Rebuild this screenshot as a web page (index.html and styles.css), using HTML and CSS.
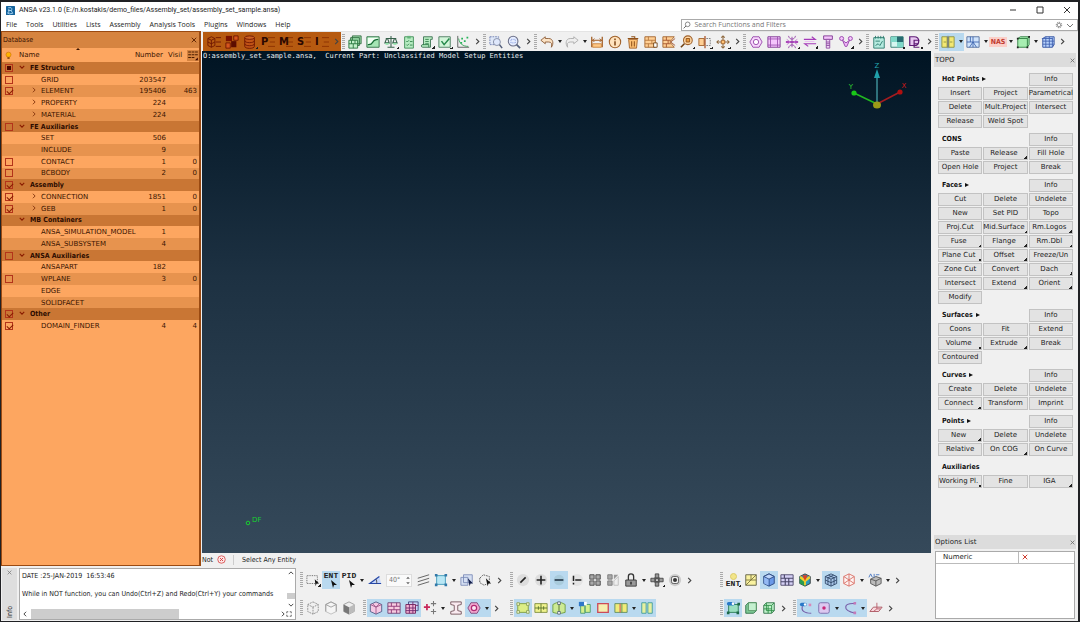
FILE: index.html
```html
<!DOCTYPE html>
<html lang="en">
<head>
<meta charset="utf-8">
<title>ANSA v23.1.0</title>
<link rel="stylesheet" href="styles.css">
</head>
<body>
<svg class="sprite" aria-hidden="true">
  <symbol id="i-app" viewBox="0 0 16 16"><rect width="16" height="16" rx="1" fill="#14639c"/><path d="M4 3h5a3 3 0 0 1 0 5l3 5M5 5v8M4 8h6M2 12l4 2 6-1" fill="none" stroke="#bfe6ff" stroke-width="1.4"/></symbol>
  <symbol id="i-bulb" viewBox="0 0 16 16"><circle cx="8" cy="6.500" r="4.500" fill="#ffb300" stroke="#c86a00"/><path d="M6 11h4v3H6z" fill="#8a4a10"/></symbol>
  <symbol id="i-cols" viewBox="0 0 16 16"><path d="M1 3h4M6 3h4M11 3h4M1 7h4M6 7h4M11 7h4M1 11h4M6 11h4" stroke="#4a1c00" stroke-width="1.500"/><path d="M15 11v4h-4z" fill="#300"/></symbol>
  <symbol id="i-down" viewBox="0 0 8 8"><path d="M1 2.500l3 3 3-3" fill="none" stroke="#8a1c00" stroke-width="1.500"/></symbol>
  <symbol id="i-right" viewBox="0 0 8 8"><path d="M2.500 1l3 3-3 3" fill="none" stroke="#8a3a10" stroke-width="1.300"/></symbol>
  <symbol id="i-chev" viewBox="0 0 8 8"><path d="M2.500 1l3 3-3 3" fill="none" stroke="#444" stroke-width="1.300"/></symbol>
  <symbol id="i-x" viewBox="0 0 8 8"><path d="M1 1l6 6M7 1L1 7" fill="none" stroke="currentColor" stroke-width="1.200"/></symbol>
  <symbol id="i-gear" viewBox="0 0 12 12"><circle cx="6" cy="6" r="4" fill="none" stroke="#777" stroke-width="1.500" stroke-dasharray="2 1"/><circle cx="6" cy="6" r="2.500" fill="none" stroke="#777"/></symbol>
  <symbol id="i-find" viewBox="0 0 12 12"><circle cx="7" cy="5" r="3.500" fill="none" stroke="#555"/><path d="M4.500 7.500L1 11" stroke="#555" stroke-width="1.300"/></symbol>

  <symbol id="i-tree" viewBox="0 0 16 16"><path d="M1 4l4-2 4 2v8l-4 2-4-2zM1 4l4 2 4-2M5 6v8M1 8l4 2 4-2" fill="none" stroke="#6b1500"/><path d="M10 3h6M10 8h6M10 13h6" stroke="#6b1500"/></symbol>
  <symbol id="i-parts" viewBox="0 0 16 16"><path d="M1 1h7v6H1z" fill="#7a1200"/><path d="M7 7h6v7H7z" fill="#5b0d00"/><path d="M10 1h5v5h-5zM1 9h5v6H1z" fill="#d4551d" stroke="#6b1500"/></symbol>
  <symbol id="i-db" viewBox="0 0 16 16"><path d="M2 3v10c0 3 11 3 11 0V3M2 6.500c0 3 11 3 11 0M2 10c0 3 11 3 11 0" fill="#c15316" stroke="#6b1500"/><ellipse cx="7.500" cy="3" rx="5.500" ry="2" fill="#cc6124" stroke="#6b1500"/></symbol>
  <symbol id="i-lines" viewBox="0 0 16 16"><path d="M8 3h8M10 8h6M8 13h8" stroke="#8a3000"/></symbol>

  <symbol id="i-stack" viewBox="0 0 16 16"><path d="M5 1h10v9H5zM3 3h10v9H3z" fill="#9ad8a8" stroke="#2f6b3e"/><path d="M1 6h10v9H1z" fill="#c3efca" stroke="#23733a"/><path d="M1 10h10M4 6v4M8 6v4M6 10v5" stroke="#23733a"/></symbol>
  <symbol id="i-curvebox" viewBox="0 0 16 16"><path d="M1 2h14v12H1z" fill="#a5e5b4" stroke="#2b6d40"/><path d="M2 11c8 1 3-6 12-6v-2H2z" fill="#f0fff2"/><path d="M2 11c8 1 3-6 12-6" fill="none" stroke="#176c35" stroke-width="1.400"/></symbol>
  <symbol id="i-scale" viewBox="0 0 16 16"><path d="M8 1v13M4 14h8M2 4h12M3 4L1 9h5L4 4M12 4l-2 5h5l-2-5" fill="none" stroke="#35604a" stroke-width="1.200"/><path d="M1 9h5l-1 2H2zM10 9h5l-1 2h-3z" fill="#8fdda5"/></symbol>
  <symbol id="i-clip" viewBox="0 0 16 16"><path d="M3 2h10v13H3z" fill="#b7ecc2" stroke="#3b8a52"/><path d="M6 1h4v3H6z" fill="#65b47b"/><path d="M5 7l1 1 2-2M5 11l1 1 2-2M9 7.500h3M9 11.500h3" fill="none" stroke="#2f7d47"/></symbol>
  <symbol id="i-scroll" viewBox="0 0 16 16"><path d="M4 2h10v3h-2v9H3c-2 0-2-3 0-3h1z" fill="#b7ecc2" stroke="#3b7050"/><path d="M6 5h4M6 7.500h4M6 10h4M3 11h7v3" fill="none" stroke="#2f7d47"/></symbol>
  <symbol id="i-check" viewBox="0 0 16 16"><path d="M1 2h13v12H1z" fill="#d2f5d9" stroke="#47785a"/><path d="M4 7l3 4 6-7" fill="none" stroke="#24884a" stroke-width="1.700"/></symbol>
  <symbol id="i-plot" viewBox="0 0 16 16"><path d="M2 1v13h13" fill="none" stroke="#555"/><path d="M3 4c1 6 5 9 11 9" fill="none" stroke="#2f9f52"/><path d="M6 3h2v2H6zM9 6h2v2H9zM12 2h2v2h-2zM5 8h2v2H5z" fill="#28b35a"/></symbol>
  <symbol id="i-zoombox" viewBox="0 0 16 16"><path d="M1 2h10v9H1z" fill="#dfe8f8" stroke="#6b7bb0" stroke-dasharray="2 1"/><circle cx="9" cy="8" r="4" fill="#dfe8fc" stroke="#8088a0"/><path d="M12 11l3 4" stroke="#55607c" stroke-width="1.800"/></symbol>
  <symbol id="i-zoom" viewBox="0 0 16 16"><circle cx="7" cy="7" r="5.500" fill="#e5ecff" stroke="#6b6f88" stroke-width="1.200"/><path d="M4.500 5h5v4h-5z" fill="none" stroke="#7d96d8" stroke-dasharray="1 1"/><path d="M11 11l4 4" stroke="#55607c" stroke-width="2"/></symbol>
  <symbol id="i-undo" viewBox="0 0 16 16"><path d="M6 2L1 6l5 4V8h4c3 0 4 2 3 6 3-4 2-10-3-10H6z" fill="#fbe2c4" stroke="#8b5a35"/></symbol>
  <symbol id="i-redo" viewBox="0 0 16 16"><path d="M10 2l5 4-5 4V8H6c-3 0-4 2-3 6C0 10 1 4 6 4h4z" fill="#eee" stroke="#aaa"/></symbol>
  <symbol id="i-measure" viewBox="0 0 16 16"><path d="M2 2v12M14 2v12M2 6h12" stroke="#a05a20" stroke-width="1.400"/><path d="M3 10h10v4H3z" fill="#ffc987" stroke="#c8813c"/><path d="M5 4L3 6l2 2M11 4l2 2-2 2" fill="none" stroke="#a05a20"/></symbol>
  <symbol id="i-info" viewBox="0 0 16 16"><circle cx="8" cy="8" r="6.500" fill="#ffe3be" stroke="#a0612a" stroke-width="1.200"/><path d="M8 7v5M8 4v2" stroke="#7d4415" stroke-width="1.700"/></symbol>
  <symbol id="i-trash" viewBox="0 0 16 16"><path d="M3 5h10l-1 10H4z" fill="#ffc274" stroke="#a0612a"/><path d="M2 4h12M6 2h4v2M6.500 7v6M9.500 7v6" fill="none" stroke="#8f5018" stroke-width="1.200"/></symbol>
  <symbol id="i-mesh" viewBox="0 0 16 16"><path d="M1 2h12v12H1z" fill="#ffcf94" stroke="#a0612a"/><path d="M1 6h12M1 10h12M5 2v4M9 6v4M5 10v4" stroke="#b5763c"/><path d="M11 9h4v5h-4z" fill="#fff" stroke="#704010"/></symbol>
  <symbol id="i-meshcut" viewBox="0 0 16 16"><path d="M1 2h13L9 8l5 6H1z" fill="#ffcf94" stroke="#a0612a"/><path d="M1 6h9M1 10h9M5 2v4M7 6v4M5 10v4M10 8l5-4M10 8l5 4" stroke="#a0512a"/></symbol>
  <symbol id="i-lens" viewBox="0 0 16 16"><circle cx="9" cy="6" r="5" fill="#ffd9a8" stroke="#a0612a" stroke-width="1.200"/><path d="M7 4h4v4H7z" fill="#e89a40" stroke="#8f5018"/><path d="M5 10l-4 4" stroke="#704010" stroke-width="1.800"/></symbol>
  <symbol id="i-mirror" viewBox="0 0 16 16"><path d="M1 4h6v8H1z" fill="#ffcf94" stroke="#a0612a"/><path d="M8 1v14" stroke="#a04010" stroke-width="1.300"/><path d="M9.500 4H14v8H9.500" fill="none" stroke="#777" stroke-dasharray="2 1"/></symbol>
  <symbol id="i-move" viewBox="0 0 16 16"><path d="M8 1v14M1 8h14M6 3l2-2 2 2M6 13l2 2 2-2M3 6L1 8l2 2M13 6l2 2-2 2" fill="none" stroke="#8f6a40" stroke-width="1.200"/><path d="M6 6h4v4H6z" fill="#ffc274" stroke="#a0612a"/></symbol>
  <symbol id="i-nut" viewBox="0 0 16 16"><path d="M4.500 2h7L15 8l-3.500 6h-7L1 8z" fill="#f7d5fb" stroke="#9440a8"/><circle cx="8" cy="8" r="3" fill="#fff" stroke="#9440a8"/></symbol>
  <symbol id="i-frame" viewBox="0 0 16 16"><path d="M1 2h14v12H1z" fill="#f4c5fb" stroke="#7d3590"/><path d="M4 2v12M12 2v12M1 4.500h14M1 11.500h14" stroke="#9d50b0"/></symbol>
  <symbol id="i-spider" viewBox="0 0 16 16"><path d="M1 8h14" stroke="#a030b0" stroke-width="2"/><path d="M4 1c1 5 7 5 8 0M4 15c1-5 7-5 8 0M8 2v12" fill="none" stroke="#9440a8"/><path d="M2 5l4 3-4 3M14 5l-4 3 4 3" fill="none" stroke="#c470d4"/></symbol>
  <symbol id="i-swap" viewBox="0 0 16 16"><path d="M1 5h13l-4-3M15 10H2l4 3" fill="none" stroke="#a43ab8" stroke-width="1.300"/><path d="M2 7h11v1H2z" fill="#ecb9f4"/></symbol>
  <symbol id="i-bolt" viewBox="0 0 16 16"><path d="M3 1h10v4H3z" fill="#f4c5fb" stroke="#7d3590"/><path d="M6 5h4v10H6zM6 8h4M6 10h4M6 12h4" fill="#f0d5f5" stroke="#8d4aa0"/></symbol>
  <symbol id="i-y" viewBox="0 0 16 16"><circle cx="3" cy="4" r="2.300" fill="#f4c5fb" stroke="#9440a8"/><circle cx="13" cy="4" r="2.300" fill="#f4c5fb" stroke="#9440a8"/><path d="M4 6l3 7h2l3-7-4 3z" fill="#edb5f6" stroke="#9440a8"/></symbol>
  <symbol id="i-note" viewBox="0 0 16 16"><path d="M2 3h12v12H2z" fill="#b5eadf" stroke="#28786b"/><path d="M4 1v3M7 1v3M10 1v3M13 1v3M4 7h5M4 12l3-2 2 2 3-5" fill="none" stroke="#28786b"/></symbol>
  <symbol id="i-checker" viewBox="0 0 16 16"><path d="M1 2h14v12H1z" fill="#d6f6f0" stroke="#28786b"/><path d="M1 2h7v6H1zM8 8h7v6H8z" fill="#7fd8c8"/><path d="M8 2h7v6H8z" fill="#276b70"/></symbol>
  <symbol id="i-de" viewBox="0 0 16 16"><path d="M2 2h5c7 0 7 10 0 10H2z" fill="#e7c7f0" stroke="#5d1b74" stroke-width="1.400"/><path d="M13 6H7v8h6M7 10h5" fill="none" stroke="#5d1b74" stroke-width="1.400"/></symbol>
  <symbol id="i-yellow2" viewBox="0 0 16 16"><path d="M1 2h6v12H1zM9 2h6v12H9z" fill="#f3e873" stroke="#8a9040"/><path d="M8 1v14" stroke="#555"/><path d="M3 8h3M10 8h3" stroke="#8a9040"/></symbol>
  <symbol id="i-bluegrid" viewBox="0 0 16 16"><path d="M1 2h14v12H1z" fill="#cfe3fb" stroke="#506c9c"/><path d="M1 8h14M8 2v12M4 14l4-6 4 6M5 2v6" fill="none" stroke="#3c63ae"/></symbol>
  <symbol id="i-greenbox" viewBox="0 0 16 16"><path d="M2 4l3-2h10v9l-2 3H2z" fill="#a7eeb1" stroke="#2c7d3f"/><path d="M2 4h11v10M13 4l2-2" fill="none" stroke="#2c7d3f"/><path d="M1 3h2v2H1zM1 13h2v2H1zM12 13h2v2h-2zM14 1h2v2h-2z" fill="#222"/></symbol>
  <symbol id="i-bluecube" viewBox="0 0 16 16"><path d="M2 4l3-2h10v9l-2 3H2z" fill="#b9d3fb" stroke="#2b4c9c"/><path d="M2 7h13M2 10.500h13M5.500 2v12M9.500 2v12M13 3v11M1 4h12" stroke="#3f60b0"/></symbol>

  <symbol id="i-selbox" viewBox="0 0 16 16"><path d="M1 3h12v9H1z" fill="none" stroke="#555" stroke-dasharray="1 1"/><path d="M10 7l5 5-3 0-1 3z" fill="#111"/></symbol>
  <symbol id="i-angle" viewBox="0 0 16 16"><path d="M2 12h13L13 4z" fill="#c8d8fb"/><path d="M15 12H2L13 4" fill="none" stroke="#2648a8" stroke-width="1.400"/><path d="M9 7c1 1 1 3 1 5" fill="none" stroke="#444"/></symbol>
  <symbol id="i-hatch" viewBox="0 0 16 16"><path d="M2 6l13-4M2 10l13-4M2 14l13-4" stroke="#555" fill="none"/></symbol>
  <symbol id="i-nodes" viewBox="0 0 16 16"><path d="M3 3h10v10H3z" fill="#b9e7f5" stroke="#3c98b8"/><path d="M1 1h3v3H1zM12 1h3v3h-3zM1 12h3v3H1zM12 12h3v3h-3z" fill="#3278a8"/></symbol>
  <symbol id="i-copysel" viewBox="0 0 16 16"><path d="M1 5h8v9H1zM4 2h10v9H4z" fill="#d5dff2" stroke="#7b8bb8"/><path d="M9 6l6 6-3 0-1 3z" fill="#14204c"/></symbol>
  <symbol id="i-polysel" viewBox="0 0 16 16"><path d="M2 6l4-4 7 2v7l-6 3-5-3z" fill="none" stroke="#555" stroke-dasharray="2 1"/><path d="M9 6l6 6-3 0-1 3z" fill="#111"/></symbol>
  <symbol id="i-wire1" viewBox="0 0 16 16"><path d="M8 1l6 3v8l-6 3-6-3V4zM2 4l6 3 6-3M8 7v8" fill="none" stroke="#888" stroke-dasharray="2 1"/></symbol>
  <symbol id="i-wire2" viewBox="0 0 16 16"><path d="M8 1l6 3v8l-6 3-6-3V4z" fill="#f5f5f5" stroke="#bbb"/><path d="M2 12V4l6-3 6 3v8M2 4l6 3 6-3" fill="none" stroke="#999"/></symbol>
  <symbol id="i-wire3" viewBox="0 0 16 16"><path d="M8 1l6 3v8l-6 3-6-3V4z" fill="#eee" stroke="#999"/><path d="M2 4l6 3v8l-6-3z" fill="#777"/><path d="M8 7l6-3v8l-6 3z" fill="#bbb"/></symbol>
  <symbol id="i-pinkhex" viewBox="0 0 16 16"><path d="M8 1l6.500 3v8L8 15l-6.500-3V4z" fill="#f5c9e4" stroke="#4c5a84"/><path d="M1.500 4L8 7l6.500-3M8 7v8M4 3l4 4 4-4" fill="none" stroke="#9c5588"/></symbol>
  <symbol id="i-pinkgrid" viewBox="0 0 16 16"><path d="M1 2h14v12H1z" fill="#f7cbe0" stroke="#6c4474"/><path d="M1 6h14M1 10h14M5 2v4M11 2v4M8 6v4M5 10v4M11 10v4" stroke="#8c3474"/></symbol>
  <symbol id="i-pinkgrid2" viewBox="0 0 16 16"><path d="M4 1h11v10H4z" fill="#c7d5f5" stroke="#404880"/><path d="M1 4h11v10H1z" fill="#f5b5d4" stroke="#701b54"/><path d="M1 8h11M1 11h11M5 4v10M9 4v10M12 5h3M9 1v3" stroke="#70246c"/></symbol>
  <symbol id="i-plusses" viewBox="0 0 16 16"><path d="M1 7h7M4.500 3.500v7" stroke="#c8285a" stroke-width="2"/><path d="M9 3h6M12 0v6M9 12h6M12 9v6" stroke="#777" stroke-width="1.200"/></symbol>
  <symbol id="i-beam" viewBox="0 0 16 16"><path d="M2 1h12v3l-4 1v6l4 1v3H2v-3l4-1V5L2 4z" fill="#faeaf0" stroke="#705058"/></symbol>
  <symbol id="i-pinknut" viewBox="0 0 16 16"><path d="M4.500 2h7L15 8l-3.500 6h-7L1 8z" fill="#f3a9cf" stroke="#7c4478"/><circle cx="8" cy="8" r="3" fill="#fce6f2" stroke="#b02a74" stroke-width="1.400"/></symbol>

  <symbol id="i-slash" viewBox="0 0 16 16"><circle cx="8" cy="8" r="7" fill="#ddd"/><path d="M5 11l6-6" stroke="#222" stroke-width="1.800"/></symbol>
  <symbol id="i-plus" viewBox="0 0 16 16"><circle cx="8" cy="8" r="7" fill="#ddd"/><path d="M3 8h10M8 3v10" stroke="#222" stroke-width="1.800"/></symbol>
  <symbol id="i-minus" viewBox="0 0 16 16"><circle cx="8" cy="8" r="6" fill="#a9cbdc"/><path d="M3 8h10" stroke="#234" stroke-width="1.800"/></symbol>
  <symbol id="i-bang" viewBox="0 0 16 16"><circle cx="8" cy="8" r="7" fill="#e4e4e4"/><path d="M4 3v6M4 11v2M6 8h7" stroke="#222" stroke-width="1.700"/></symbol>
  <symbol id="i-four" viewBox="0 0 16 16"><path d="M2 2h5v5H2zM9 2h5v5H9zM2 9h5v5H2zM9 9h5v5H9z" fill="#aaa" stroke="#444"/></symbol>
  <symbol id="i-fourcut" viewBox="0 0 16 16"><path d="M2 2h5v5H2zM2 9h5v5H2z" fill="#aaa" stroke="#777"/><path d="M9 2h5L9 7z" fill="#999"/><path d="M14 4v10H9V9z" fill="#eee" stroke="#bbb"/></symbol>
  <symbol id="i-lock" viewBox="0 0 16 16"><path d="M2 8h12v7H2z" fill="#999" stroke="#333"/><path d="M5 8V4c0-4 6-4 6 0v4" fill="none" stroke="#333" stroke-width="1.500"/><path d="M8 10v3" stroke="#222" stroke-width="1.500"/></symbol>
  <symbol id="i-crossbox" viewBox="0 0 16 16"><path d="M6 1h4v14H6zM1 6h14v4H1z" fill="#999" stroke="#444"/><path d="M5 5h6v6H5z" fill="#555"/><path d="M7 7h2v2H7z" fill="#ddd"/></symbol>
  <symbol id="i-target" viewBox="0 0 16 16"><circle cx="8" cy="8" r="7" fill="#ccc"/><rect x="4" y="4" width="8" height="8" rx="2" fill="#eee" stroke="#555"/><circle cx="8" cy="8" r="2.300" fill="#333"/></symbol>
  <symbol id="i-y1" viewBox="0 0 16 16"><path d="M2 3h12v10H2z" fill="#dcee86" stroke="#7c9a3c"/><path d="M1 2h3v3H1zM12 2h3v3h-3zM1 11h3v3H1zM12 11h3v3h-3z" fill="#eef6c6" stroke="#8aa05a"/></symbol>
  <symbol id="i-y2" viewBox="0 0 16 16"><path d="M1 3h14v10H1z" fill="#f0f28c" stroke="#7c8a3c"/><path d="M1 8h14M8 3v10M5 6v4M11 6v4" stroke="#56702a"/></symbol>
  <symbol id="i-y3" viewBox="0 0 16 16"><path d="M1 4l4-2h6l4 2v9l-4 1H5l-4-1z" fill="#cdea94" stroke="#6c9a3c"/><path d="M8 3v11" stroke="#4a6a24"/><path d="M6.500 1h3v3h-3zM6.500 12h3v3h-3z" fill="#fff" stroke="#567"/></symbol>
  <symbol id="i-y4" viewBox="0 0 16 16"><path d="M3 5h5v9H3zM8 4h6v9H8z" fill="#d4f08c" stroke="#4c9a74"/><path d="M1 1h6v5H1z" fill="#2e78c8"/><path d="M7 1h3v4H7z" fill="#fff"/></symbol>
  <symbol id="i-y5" viewBox="0 0 16 16"><path d="M2 3h12v10H2z" fill="#f6eeb0" stroke="#cc4a5a" stroke-width="1.500"/></symbol>
  <symbol id="i-y6" viewBox="0 0 16 16"><path d="M1 3h14v10H1z" fill="#f1ec78" stroke="#5c8a5c"/><path d="M7 3v10" stroke="#cc5a5a" stroke-width="1.300"/><path d="M9 3v10" stroke="#4c8a5c"/></symbol>
  <symbol id="i-y7" viewBox="0 0 16 16"><path d="M2 2h5v12H2zM9 2h5v12H9z" fill="#e6f0a0" stroke="#3c9a9c"/></symbol>

  <symbol id="i-ysheet" viewBox="0 0 16 16"><path d="M2 2h12v12H2z" fill="#faf2a0" stroke="#5a5a40"/><path d="M2 14L14 2M2 8h6V2M8 8l6 0" fill="none" stroke="#77703a"/></symbol>
  <symbol id="i-shade" viewBox="0 0 16 16"><path d="M8 1l6 3v8l-6 3-6-3V4z" fill="#6a9ae8" stroke="#26427c"/><path d="M8 1l6 3-6 3-6-3z" fill="#bdd6fb" stroke="#26427c"/><path d="M8 7v8" stroke="#26427c"/><path d="M2.500 4.800L7.500 7.300v7L2.500 12z" fill="#94b9f3"/></symbol>
  <symbol id="i-violet" viewBox="0 0 16 16"><path d="M1 2h14v12H1z" fill="#d5d0f4" stroke="#4a4668"/><path d="M1 6h14M1 10h14M5 2v4M10 6v8M6 6v8" stroke="#4a4668" stroke-width="1.300"/></symbol>
  <symbol id="i-rainbow" viewBox="0 0 16 16"><path d="M8 1l6 3v8l-6 3-6-3V4z" fill="#2d9ac0" stroke="#333"/><path d="M2 4l6 3v8l-6-3z" fill="#2a9c50"/><path d="M3 3l5 4 5-4 1 3-5 4v4H7v-4L2 6z" fill="#f4d02c"/><path d="M5 2.500h6L8 9z" fill="#e04020"/></symbol>
  <symbol id="i-meshcube" viewBox="0 0 16 16"><path d="M8 1l6.500 3v8L8 15l-6.500-3V4z" fill="#a8c6e8" stroke="#304868"/><path d="M1.500 4L8 7l6.500-3M8 7v8M1.500 8L8 11l6.500-3M5 2.500l6.500 3v8M11 2.500l-6.500 3v8" fill="none" stroke="#304868"/></symbol>
  <symbol id="i-redcube" viewBox="0 0 16 16"><path d="M8 1l6 3v8l-6 3-6-3V4zM2 4l6 4 6-4M8 1v14M2 12l6-4 6 4" fill="#fff4f2" stroke="#d86a60"/></symbol>
  <symbol id="i-greycube" viewBox="0 0 16 16"><path d="M9 4l6 2v6l-6 3-6-3V7z" fill="#bbb" stroke="#555"/><path d="M3 7l6 2 6-3M9 9v6" fill="none" stroke="#555"/><path d="M1 5l2-4 2 4M7 1v4M9 2h4" fill="none" stroke="#4272c0"/></symbol>
  <symbol id="i-gtoggle" viewBox="0 0 16 16"><path d="M3 4h11v9H3z" fill="#9adfc0" stroke="#257850"/><path d="M1 12h3v3H1zM12 12h3v3h-3zM13 2h3v3h-3z" fill="#1d6848"/><rect x="1" y="1" width="9" height="4" rx="2" fill="#2878c8"/><circle cx="8" cy="3" r="1.500" fill="#fff"/></symbol>
  <symbol id="i-gcube" viewBox="0 0 16 16"><path d="M2 5l3-3h9v9l-3 3H2z" fill="#7fca96" stroke="#2c6d45"/><path d="M5 2h9v9H5z" fill="#c4f0cf" stroke="#52905f"/></symbol>
  <symbol id="i-gcube2" viewBox="0 0 16 16"><path d="M2 5l3-3h9v9l-3 3H2z" fill="#c2f2cc" stroke="#2c6d45"/><path d="M2 9h9M7 5v9M2 5h9v9M11 5l3-3M5 2v9h9" fill="none" stroke="#2c8d45"/></symbol>
  <symbol id="i-ctoggle" viewBox="0 0 16 16"><path d="M4 6c-2 5 2 8 10 8" fill="none" stroke="#775ea8" stroke-width="1.300"/><rect x="1" y="2" width="8" height="4" rx="2" fill="#2878c8"/><circle cx="7" cy="4" r="1.500" fill="#fff"/><path d="M11 3h3v3h-3z" fill="#d888b8"/></symbol>
  <symbol id="i-pinkpt" viewBox="0 0 16 16"><rect x="2" y="2" width="12" height="12" rx="2" fill="#dcc8f0" stroke="#7868a8"/><circle cx="8" cy="8" r="2" fill="#c82878"/></symbol>
  <symbol id="i-arc" viewBox="0 0 16 16"><path d="M14 3C1 2-2 10 14 14" fill="none" stroke="#775ea8" stroke-width="1.300"/><path d="M12 1h3v3h-3zM12 12h3v3h-3z" fill="#c47ab8"/></symbol>
  <symbol id="i-plane" viewBox="0 0 16 16"><path d="M1 12l4-5h10l-4 5z" fill="#f9d9de" stroke="#a8505c"/><path d="M9 9V2M9 9h4M9 9l-4 3" stroke="#b85a68"/></symbol>
  <symbol id="i-stop" viewBox="0 0 12 12"><circle cx="6" cy="6" r="5" fill="#fde6e6" stroke="#d43a3a"/><path d="M4 4l4 4M8 4L4 8" stroke="#d43a3a" stroke-width="1.200"/></symbol>
  <symbol id="i-cursor" viewBox="0 0 8 8"><path d="M1 0l6 5-3 0-1 3z" fill="#111"/></symbol>
</svg>

<div class="window">
  <header class="titlebar">
    <svg class="app-icon"><use href="#i-app"/></svg>
    <h1 class="title">ANSA v23.1.0 (E:/n.kostakis/demo_files/Assembly_set/assembly_set_sample.ansa)</h1>
    <div class="win-controls">
      <button aria-label="Minimize"><svg viewBox="0 0 8 8"><path d="M1 4h6" stroke="#333"/></svg></button>
      <button aria-label="Maximize"><svg viewBox="0 0 8 8"><path d="M1 1h6v6H1z" fill="none" stroke="#333"/></svg></button>
      <button aria-label="Close"><svg viewBox="0 0 8 8"><path d="M1 1l6 6M7 1L1 7" stroke="#333"/></svg></button>
    </div>
  </header>
  <nav class="menubar">
    <button>File</button><button>Tools</button><button>Utilities</button><button>Lists</button><button>Assembly</button><button>Analysis Tools</button><button>Plugins</button><button>Windows</button><button>Help</button>
    <label class="search"><svg><use href="#i-find"/></svg><input type="text" placeholder="Search Functions and Filters" aria-label="Search Functions and Filters"><svg><use href="#i-gear"/></svg><svg viewBox="0 0 8 8"><path d="M1 3l3 3 3-3" fill="none" stroke="#777"/></svg></label>
  </nav>

  <div class="workspace">
    <section class="database">
      <header class="db-title"><span>Database</span><button aria-label="Close Database"><svg><use href="#i-x"/></svg></button></header>
      <table class="tree">
        <thead><tr><th class="c-check"><svg><use href="#i-bulb"/></svg></th><th class="c-name">Name<i class="sort"></i></th><th class="c-num">Number</th><th class="c-vis"><span>Visil</span><svg><use href="#i-cols"/></svg></th></tr></thead>
        <tbody>
          <tr class="group"><td><input type="checkbox" class="part" aria-label="FE Structure"></td><td><svg><use href="#i-down"/></svg>FE Structure</td><td></td><td></td></tr>
          <tr><td><input type="checkbox" aria-label="GRID"></td><td class="leaf">GRID</td><td>203547</td><td></td></tr>
          <tr class="alt"><td><input type="checkbox" checked aria-label="ELEMENT"></td><td class="node"><svg><use href="#i-right"/></svg>ELEMENT</td><td>195406</td><td>463</td></tr>
          <tr><td></td><td class="node"><svg><use href="#i-right"/></svg>PROPERTY</td><td>224</td><td></td></tr>
          <tr class="alt"><td></td><td class="node"><svg><use href="#i-right"/></svg>MATERIAL</td><td>224</td><td></td></tr>
          <tr class="group"><td><input type="checkbox" aria-label="FE Auxiliaries"></td><td><svg><use href="#i-down"/></svg>FE Auxiliaries</td><td></td><td></td></tr>
          <tr><td></td><td class="leaf">SET</td><td>506</td><td></td></tr>
          <tr class="alt"><td></td><td class="leaf">INCLUDE</td><td>9</td><td></td></tr>
          <tr><td><input type="checkbox" aria-label="CONTACT"></td><td class="leaf">CONTACT</td><td>1</td><td>0</td></tr>
          <tr class="alt"><td><input type="checkbox" aria-label="BCBODY"></td><td class="leaf">BCBODY</td><td>2</td><td>0</td></tr>
          <tr class="group"><td><input type="checkbox" checked aria-label="Assembly"></td><td><svg><use href="#i-down"/></svg>Assembly</td><td></td><td></td></tr>
          <tr><td><input type="checkbox" checked aria-label="CONNECTION"></td><td class="node"><svg><use href="#i-right"/></svg>CONNECTION</td><td>1851</td><td>0</td></tr>
          <tr class="alt"><td><input type="checkbox" checked aria-label="GEB"></td><td class="node"><svg><use href="#i-right"/></svg>GEB</td><td>1</td><td>0</td></tr>
          <tr class="group"><td></td><td><svg><use href="#i-down"/></svg>MB Containers</td><td></td><td></td></tr>
          <tr><td></td><td class="leaf">ANSA_SIMULATION_MODEL</td><td>1</td><td></td></tr>
          <tr class="alt"><td></td><td class="leaf">ANSA_SUBSYSTEM</td><td>4</td><td></td></tr>
          <tr class="group"><td><input type="checkbox" aria-label="ANSA Auxiliaries"></td><td><svg><use href="#i-down"/></svg>ANSA Auxiliaries</td><td></td><td></td></tr>
          <tr><td></td><td class="leaf">ANSAPART</td><td>182</td><td></td></tr>
          <tr class="alt"><td><input type="checkbox" aria-label="WPLANE"></td><td class="leaf">WPLANE</td><td>3</td><td>0</td></tr>
          <tr><td></td><td class="leaf">EDGE</td><td></td><td></td></tr>
          <tr class="alt"><td></td><td class="leaf">SOLIDFACET</td><td></td><td></td></tr>
          <tr class="group"><td><input type="checkbox" checked aria-label="Other"></td><td><svg><use href="#i-down"/></svg>Other</td><td></td><td></td></tr>
          <tr><td><input type="checkbox" checked aria-label="DOMAIN_FINDER"></td><td class="leaf">DOMAIN_FINDER</td><td>4</td><td>4</td></tr>
        </tbody>
      </table>
    </section>

    <div class="toolbar">
      <div class="bar hot">
        <button class="tool"><svg><use href="#i-tree"/></svg></button><button class="tool"><svg><use href="#i-parts"/></svg></button><button class="tool more"><svg><use href="#i-db"/></svg></button><button class="tool letter"><b>P</b><svg><use href="#i-lines"/></svg></button><button class="tool letter"><b>M</b><svg><use href="#i-lines"/></svg></button><button class="tool letter"><b>S</b><svg><use href="#i-lines"/></svg></button><button class="tool letter"><b>I</b><svg><use href="#i-lines"/></svg></button><button class="chev"><svg><use href="#i-chev"/></svg></button>
      </div>
      <div class="bar"><i class="grip"></i><button class="tool"><svg><use href="#i-stack"/></svg></button><button class="tool"><svg><use href="#i-curvebox"/></svg></button><button class="tool more"><svg><use href="#i-scale"/></svg></button><button class="tool"><svg><use href="#i-clip"/></svg></button><button class="tool more"><svg><use href="#i-scroll"/></svg></button><button class="tool more"><svg><use href="#i-check"/></svg></button><button class="tool"><svg><use href="#i-plot"/></svg></button><button class="chev"><svg><use href="#i-chev"/></svg></button></div>
      <div class="bar"><i class="grip"></i><button class="tool"><svg><use href="#i-zoombox"/></svg></button><button class="tool"><svg><use href="#i-zoom"/></svg></button><button class="chev"><svg><use href="#i-chev"/></svg></button></div>
      <div class="bar"><i class="grip"></i><button class="tool"><svg><use href="#i-undo"/></svg></button><button class="caret" aria-label="Undo list"></button><button class="tool"><svg><use href="#i-redo"/></svg></button><button class="caret" aria-label="Redo list"></button><button class="tool"><svg><use href="#i-measure"/></svg></button><button class="tool"><svg><use href="#i-info"/></svg></button><button class="tool"><svg><use href="#i-trash"/></svg></button><button class="tool"><svg><use href="#i-mesh"/></svg></button><button class="tool"><svg><use href="#i-meshcut"/></svg></button><button class="tool more"><svg><use href="#i-lens"/></svg></button><button class="tool more"><svg><use href="#i-mirror"/></svg></button><button class="tool more"><svg><use href="#i-move"/></svg></button><button class="chev"><svg><use href="#i-chev"/></svg></button></div>
      <div class="bar"><i class="grip"></i><button class="tool"><svg><use href="#i-nut"/></svg></button><button class="tool"><svg><use href="#i-frame"/></svg></button><button class="tool more"><svg><use href="#i-spider"/></svg></button><button class="tool more"><svg><use href="#i-swap"/></svg></button><button class="tool"><svg><use href="#i-bolt"/></svg></button><button class="tool more"><svg><use href="#i-y"/></svg></button><button class="chev"><svg><use href="#i-chev"/></svg></button></div>
      <div class="bar"><i class="grip"></i><button class="tool"><svg><use href="#i-note"/></svg></button><button class="tool more"><svg><use href="#i-checker"/></svg></button><button class="tool more"><svg><use href="#i-de"/></svg></button><button class="chev"><svg><use href="#i-chev"/></svg></button></div>
      <div class="bar"><i class="grip"></i><button class="tool on"><svg><use href="#i-yellow2"/></svg></button><button class="caret on" aria-label="View list"></button><button class="tool"><svg><use href="#i-bluegrid"/></svg></button><button class="caret" aria-label="Grid list"></button><button class="tool nas">NAS</button><button class="caret" aria-label="Deck list"></button><button class="tool"><svg><use href="#i-greenbox"/></svg></button><button class="caret" aria-label="Box list"></button><button class="tool"><svg><use href="#i-bluecube"/></svg></button><button class="chev"><svg><use href="#i-chev"/></svg></button></div>
    </div>

    <main class="view">
      <div class="canvas">
        <p class="hud">O:assembly_set_sample.ansa,&nbsp; Current Part: Unclassified Model Setup Entities</p>
        <svg class="triad" viewBox="0 0 64 50">
          <path d="M30 42V11" stroke="#3c8f98" stroke-width="1.500"/><path d="M30 42L7 31" stroke="#22b822" stroke-width="1.500"/><path d="M30 42l23-12" stroke="#a41c20" stroke-width="1.500"/>
          <path d="M30 7l3 9h-6z" fill="#1fa0aa"/><circle cx="7" cy="31" r="2.600" fill="#18c818"/><circle cx="53" cy="30" r="2.600" fill="#b01010"/><ellipse cx="30" cy="43" rx="4" ry="3.500" fill="#9c9a18"/>
          <text x="30" y="6" class="ax ax-z">Z</text><text x="4" y="27" class="ax ax-y">Y</text><text x="57" y="26" class="ax ax-x">X</text>
        </svg>
        <svg class="marker" viewBox="0 0 20 12"><circle cx="3" cy="8" r="1.800" fill="none" stroke="#18d030"/><text x="7" y="7" class="df">DF</text></svg>
      </div>
      <footer class="status"><span>Not</span><svg><use href="#i-stop"/></svg><span class="hint">Select Any Entity</span></footer>
    </main>

    <aside class="dock">
      <header class="dock-title"><span>TOPO</span><button aria-label="Close TOPO"><svg><use href="#i-x"/></svg></button></header>
      <div class="topo">
        <section class="set"><h2 class="arrow">Hot Points</h2><button>Info</button><button>Insert</button><button>Project</button><button>Parametrical</button><button>Delete</button><button>Mult.Project</button><button>Intersect</button><button>Release</button><button>Weld Spot</button></section>
        <section class="set"><h2>CONS</h2><button>Info</button><button>Paste</button><button class="more">Release</button><button>Fill Hole</button><button>Open Hole</button><button>Project</button><button>Break</button></section>
        <section class="set"><h2 class="arrow">Faces</h2><button>Info</button><button>Cut</button><button>Delete</button><button>Undelete</button><button>New</button><button>Set PID</button><button>Topo</button><button>Proj.Cut</button><button class="more">Mid.Surface</button><button class="more">Rm.Logos</button><button class="more">Fuse</button><button class="more">Flange</button><button class="more">Rm.Dbl</button><button class="more">Plane Cut</button><button class="more">Offset</button><button>Freeze/Un</button><button>Zone Cut</button><button>Convert</button><button class="more">Dach</button><button>Intersect</button><button class="more">Extend</button><button class="more">Orient</button><button>Modify</button></section>
        <section class="set"><h2 class="arrow">Surfaces</h2><button>Info</button><button>Coons</button><button>Fit</button><button>Extend</button><button class="more">Volume</button><button class="more">Extrude</button><button>Break</button><button>Contoured</button></section>
        <section class="set"><h2 class="arrow">Curves</h2><button>Info</button><button>Create</button><button>Delete</button><button>Undelete</button><button class="more">Connect</button><button>Transform</button><button>Imprint</button></section>
        <section class="set"><h2 class="arrow">Points</h2><button>Info</button><button class="more">New</button><button>Delete</button><button>Undelete</button><button>Relative</button><button class="more">On COG</button><button>On Curve</button></section>
        <section class="set"><h2 class="wide">Auxiliaries</h2><button class="more">Working Pl.</button><button>Fine</button><button class="more">IGA</button></section>
      </div>
      <header class="dock-title"><span>Options List</span><button aria-label="Close Options List"><svg><use href="#i-x"/></svg></button></header>
      <div class="options"><table><tr><td>Numeric</td><td><svg><use href="#i-x"/></svg></td></tr></table></div>
    </aside>

    <div class="bottom">
      <section class="info">
        <div class="info-tab"><button aria-label="Close Info"><svg><use href="#i-x"/></svg></button><span>Info</span></div>
        <div class="log">
          <div class="log-text"><p>DATE :25-JAN-2019&nbsp; 16:53:46</p><p>While in NOT function, you can Undo(Ctrl+Z) and Redo(Ctrl+Y) your commands</p></div>
          <div class="vbar"><svg class="up"><use href="#i-chev"/></svg><i></i><svg class="dn"><use href="#i-chev"/></svg></div>
          <div class="hbar"><svg class="lt"><use href="#i-chev"/></svg><div class="track"><i></i></div><svg><use href="#i-chev"/></svg></div>
          <svg class="full" viewBox="0 0 8 8"><path d="M1 3V1h2M5 1h2v2M7 5v2H5M3 7H1V5" fill="none" stroke="#444"/></svg>
        </div>
      </section>
      <div class="palette">
        <div class="bar"><i class="grip"></i><button class="tool more"><svg><use href="#i-selbox"/></svg></button><button class="tool word on"><span>ENT</span><svg><use href="#i-cursor"/></svg></button><button class="tool word"><span>PID</span><svg><use href="#i-cursor"/></svg></button><button class="caret" aria-label="PID list"></button><button class="tool"><svg><use href="#i-angle"/></svg></button><label class="spin"><input type="text" value="40°" aria-label="Angle"><svg viewBox="0 0 6 12"><path d="M1 4l2-2 2 2zM1 8l2 2 2-2z" fill="#666"/></svg></label><button class="tool"><svg><use href="#i-hatch"/></svg></button><button class="tool"><svg><use href="#i-nodes"/></svg></button><button class="caret" aria-label="Nodes list"></button><button class="tool"><svg><use href="#i-copysel"/></svg></button><button class="tool"><svg><use href="#i-polysel"/></svg></button><button class="chev"><svg><use href="#i-chev"/></svg></button></div>
        <div class="bar"><i class="grip"></i><button class="tool"><svg><use href="#i-wire1"/></svg></button><button class="tool"><svg><use href="#i-wire2"/></svg></button><button class="tool"><svg><use href="#i-wire3"/></svg></button><i class="grip second"></i><button class="tool on"><svg><use href="#i-pinkhex"/></svg></button><button class="tool on"><svg><use href="#i-pinkgrid"/></svg></button><button class="tool on"><svg><use href="#i-pinkgrid2"/></svg></button><button class="tool"><svg><use href="#i-plusses"/></svg></button><button class="caret" aria-label="Points list"></button><button class="tool"><svg><use href="#i-beam"/></svg></button><button class="tool on"><svg><use href="#i-pinknut"/></svg></button><button class="caret on" aria-label="Nut list"></button><button class="chev"><svg><use href="#i-chev"/></svg></button></div>
      </div>
      <div class="palette">
        <div class="bar"><i class="grip"></i><button class="tool"><svg><use href="#i-slash"/></svg></button><button class="tool"><svg><use href="#i-plus"/></svg></button><button class="tool on"><svg><use href="#i-minus"/></svg></button><button class="tool"><svg><use href="#i-bang"/></svg></button><button class="tool"><svg><use href="#i-four"/></svg></button><button class="tool"><svg><use href="#i-fourcut"/></svg></button><button class="tool"><svg><use href="#i-lock"/></svg></button><button class="caret" aria-label="Lock list"></button><button class="tool more"><svg><use href="#i-crossbox"/></svg></button><button class="tool"><svg><use href="#i-target"/></svg></button><button class="chev"><svg><use href="#i-chev"/></svg></button></div>
        <div class="bar"><i class="grip"></i><button class="tool on"><svg><use href="#i-y1"/></svg></button><button class="tool"><svg><use href="#i-y2"/></svg></button><button class="tool on"><svg><use href="#i-y3"/></svg></button><button class="caret on" aria-label="Split list"></button><button class="tool on"><svg><use href="#i-y4"/></svg></button><button class="tool on"><svg><use href="#i-y5"/></svg></button><button class="tool on"><svg><use href="#i-y6"/></svg></button><button class="caret on" aria-label="Edge list"></button><button class="tool on"><svg><use href="#i-y7"/></svg></button></div>
      </div>
      <div class="palette">
        <div class="bar"><i class="grip"></i><button class="tool word more"><i class="lamp"></i><span>ENT</span></button><button class="tool"><svg><use href="#i-ysheet"/></svg></button><button class="tool on"><svg><use href="#i-shade"/></svg></button><button class="tool"><svg><use href="#i-violet"/></svg></button><button class="tool"><svg><use href="#i-rainbow"/></svg></button><button class="caret" aria-label="Colour list"></button><button class="tool on"><svg><use href="#i-meshcube"/></svg></button><button class="tool"><svg><use href="#i-redcube"/></svg></button><button class="caret" aria-label="Wire list"></button><button class="tool"><svg><use href="#i-greycube"/></svg></button><button class="caret" aria-label="Cube list"></button><button class="chev"><svg><use href="#i-chev"/></svg></button></div>
        <div class="bar"><i class="grip"></i><button class="tool on"><svg><use href="#i-gtoggle"/></svg></button><button class="tool"><svg><use href="#i-gcube"/></svg></button><button class="tool"><svg><use href="#i-gcube2"/></svg></button><button class="chev"><svg><use href="#i-chev"/></svg></button><i class="grip second"></i><button class="tool on"><svg><use href="#i-ctoggle"/></svg></button><button class="tool on"><svg><use href="#i-pinkpt"/></svg></button><button class="caret on" aria-label="Point list"></button><button class="tool on"><svg><use href="#i-arc"/></svg></button><button class="caret on" aria-label="Arc list"></button><button class="tool"><svg><use href="#i-plane"/></svg></button><button class="chev"><svg><use href="#i-chev"/></svg></button></div>
      </div>
    </div>
  </div>
</div>
</body>
</html>
```

FILE: styles.css
```css
* { box-sizing: border-box; }
html, body { height: 100%; margin: 0; }
body {
  background: #202124;
  color: #1c1c1c;
  font: 7px/10px "DejaVu Sans Condensed", "Noto Sans", sans-serif;
}
button, input { font: inherit; color: inherit; margin: 0; padding: 0; border: 0; background: none; }
h1, h2, p { margin: 0; font: inherit; }
svg { display: block; flex: none; }
.sprite { position: absolute; width: 0; height: 0; }

.window { display: flex; flex-direction: column; height: 100%; padding: 2px 2px 1px 1px; }
.titlebar, .menubar { background: #fff; display: flex; align-items: center; }
.titlebar { height: 16px; padding: 0 7px 0 5px; gap: 4px; font-family: Roboto, sans-serif; }
.app-icon { width: 9px; height: 9px; }
.title { flex: 1; }
.win-controls { display: flex; gap: 19px; }
.win-controls button { width: 8px; }
.win-controls svg { width: 8px; height: 8px; }
.menubar { height: 13px; padding-left: 5px; gap: 9px; font-family: "Open Sans", "Noto Sans", sans-serif; }
.search { display: flex; align-items: center; gap: 3px; margin-left: auto; width: 37%; height: 12px; padding: 0 3px 0 1px; border: 1px solid #aaa; }
.search input { flex: 1; min-width: 0; outline: 0; }
.search input::placeholder { color: #777; }
.search svg { width: 8px; height: 8px; }

.workspace {
  flex: 1; min-height: 0; display: grid; background: #f0f0f0;
  grid-template: "db tools tools" 20px "db view dock" 1fr "bottom bottom dock" auto / 201px 1fr 147px;
}

.database { grid-area: db; background: #fda660; border: 1px solid #9a4a12; border-right-width: 2px; margin-right: 1px; }
.db-title { display: flex; justify-content: space-between; align-items: center; height: 16px; padding: 0 2px 0 1px; background: #d68440; color: #3a1200; }
.db-title svg { width: 6px; height: 6px; color: #5a2000; }
.tree { width: 100%; height: 284px; border-collapse: collapse; table-layout: fixed; color: #3a1400; font-family: "DejaVu Sans", sans-serif; }
.tree th { height: 14px; padding: 0; font-weight: normal; text-align: left; }
.tree td { padding: 0; line-height: 10px; white-space: nowrap; }
.tree .c-check { width: 15px; padding-left: 2px; }
.c-check svg { width: 9px; height: 9px; }
.tree .c-name { position: relative; padding-left: 2px; }
.tree .c-num { width: 44px; text-align: right; padding-right: 5px; }
.c-vis { width: 31px; }
.c-vis span { float: left; }
.tree .c-vis svg { float: right; width: 12px; height: 11px; background: #d68440; }
.sort { position: absolute; left: 59px; top: 0; border: 2px solid transparent; border-top: 0; border-bottom-color: #3a1400; }
.tree td:nth-child(1) { padding-left: 3px; }
.tree td:nth-child(3) { text-align: right; padding-right: 2px; }
.tree td:nth-child(4) { text-align: right; padding-right: 2px; }
.tree td svg { display: inline-block; width: 6px; height: 6px; margin: 0 5px 0 2px; vertical-align: 0; }
.tree .node { padding-left: 12px; }
.tree .leaf { padding-left: 24px; }
.tree .node svg { margin-right: 4px; }
.tree tr.alt { background: #e7934e; }
.tree tr.group { background: #c97634; font-family: "DejaVu Sans Condensed", sans-serif; font-weight: bold; color: #2c0c00; }
.tree input { appearance: none; display: block; width: 8px; height: 8px; border: 1px solid #b3341a; }
.tree input:checked::after { content: ""; display: block; width: 5px; height: 3px; margin: 1px 0 0 1px; border: solid #8a1c00; border-width: 0 0 1px 1px; transform: rotate(-45deg); }
.tree input.part::after { content: ""; display: block; width: 4px; height: 4px; margin: 1px; background: #4a0600; }

.toolbar { grid-area: tools; display: flex; align-items: stretch; padding-left: 1px; border-top: 1px solid #e4e4e4; }
.bar { display: flex; align-items: center; }
.hot { background: #b65a10; padding-left: 2px; }
.grip { width: 3px; height: 16px; margin: 0 1px; background: repeating-linear-gradient(#aaa 0 1px, transparent 1px 2px); }
.tool { position: relative; display: flex; align-items: center; justify-content: center; width: 18px; height: 18px; }
.tool svg { width: 14px; height: 14px; }
.on { background: #b9d9ef; }
.letter b { position: absolute; left: 2px; font: bold 11px/12px "DejaVu Sans Condensed", sans-serif; color: #2c0800; }
.nas { height: 10px; background: #fbcfc8; color: #c03a30; font: bold 7px/10px "DejaVu Sans Condensed", sans-serif; }
.word { flex-direction: column; font: bold 8px/8px "Liberation Mono", monospace; color: #222; }
.word svg { width: 8px; height: 8px; margin-left: 5px; }
.lamp { width: 7px; height: 7px; border-radius: 50%; background: #f2e58a; border: 1px solid #dccb68; }
.more { position: relative; }
.more::after { content: ""; position: absolute; right: 1px; bottom: 2px; width: 3px; height: 3px; background: linear-gradient(135deg, transparent 50%, #222 50%); }
.caret { width: 7px; height: 18px; display: flex; align-items: center; justify-content: center; }
.caret::before { content: ""; border: 2px solid transparent; border-top: 3px solid #222; border-bottom: 0; }
.chev { width: 10px; }
.chev svg { width: 7px; height: 7px; margin: auto; }

.view { grid-area: view; display: flex; flex-direction: column; min-width: 0; }
.canvas { position: relative; flex: 1; background: linear-gradient(#001423, #1d3142 45%, #35495a); overflow: hidden; }
.hud { padding: 0 1px; color: #e8eef2; font-family: "DejaVu Sans Mono", monospace; white-space: nowrap; }
.triad { position: absolute; right: 20px; top: 11px; width: 64px; height: 50px; }
.marker { position: absolute; left: 43px; bottom: 26px; width: 20px; height: 12px; }
.ax { font: 7px "DejaVu Sans", sans-serif; text-anchor: middle; }
.ax-x { fill: #d01818; }
.ax-y { fill: #30d030; }
.ax-z { fill: #22a8b0; }
.df { font: 7px "DejaVu Sans", sans-serif; fill: #18d030; }
.status { display: flex; align-items: center; height: 13px; }
.status svg { width: 9px; height: 9px; margin: 0 7px 0 4px; }
.hint { border-left: 1px solid #ccc; padding-left: 8px; }

.dock { grid-area: dock; display: flex; flex-direction: column; padding: 2px 2px 2px 3px; }
.dock-title { display: flex; justify-content: space-between; align-items: center; height: 14px; background: #dcdcdc; padding: 0 1px; font-family: "DejaVu Sans", sans-serif; }
.dock-title svg { width: 5px; height: 5px; color: #666; }
.topo { flex: 1; display: flex; flex-direction: column; gap: 5px; padding: 6px 3px 0 4px; }
.set { display: grid; grid-template-columns: repeat(3, 1fr); gap: 1px; }
.set h2 { grid-column: span 2; padding-left: 4px; font-weight: bold; line-height: 13px; color: #111; }
.set .wide { grid-column: span 3; }
.arrow::after { content: ""; display: inline-block; margin-left: 3px; border: 2px solid transparent; border-left: 4px solid #111; border-right: 0; }
.set button { min-width: 0; height: 13px; background: #e3e3e3; border: 1px solid #c2c2c2; font-family: "DejaVu Sans", sans-serif; line-height: 11px; white-space: nowrap; display: flex; justify-content: center; }
.set .more { padding-right: 3px; }
.set .more::after { right: 0; bottom: 0; }
.options { height: 68px; margin: 2px 1px 0; background: #fff; border: 1px solid #aaa; font-family: "DejaVu Sans", sans-serif; }
.options table { width: 100%; border-collapse: collapse; }
.options td { height: 11px; padding: 0 0 0 7px; border-bottom: 1px solid #bbb; }
.options td + td { width: 40%; padding-left: 3px; border-left: 1px solid #bbb; }
.options svg { width: 6px; height: 6px; color: #c8281a; }

.bottom { grid-area: bottom; display: flex; height: 55px; }
.info { display: flex; width: 298px; padding: 2px 3px 1px 1px; gap: 2px; }
.info-tab { display: flex; flex-direction: column; justify-content: space-between; align-items: center; width: 15px; padding: 2px 0; background: #dedede; }
.info-tab svg { width: 5px; height: 5px; color: #777; }
.info-tab span { writing-mode: vertical-rl; transform: rotate(180deg); }
.log { flex: 1; min-width: 0; display: grid; grid-template: 1fr 10px / 1fr 9px; background: #fff; border: 1px solid #aaa; }
.log-text { overflow: hidden; padding: 2px; white-space: nowrap; }
.log-text p + p { margin-top: 8px; }
.vbar { display: flex; flex-direction: column; justify-content: space-between; align-items: center; padding: 1px 0; }
.vbar i { width: 8px; height: 6px; margin-top: auto; margin-bottom: 3px; background: #ccc; }
.log svg { width: 6px; height: 6px; align-self: center; }
.up { transform: rotate(-90deg); }
.dn { transform: rotate(90deg); }
.lt { transform: rotate(180deg); }
.hbar { display: flex; gap: 3px; padding-left: 2px; }
.track { flex: 1; }
.track i { display: block; width: 60%; height: 10px; background: #cdcdcd; }
.palette { width: 210px; padding-top: 5px; display: flex; flex-direction: column; gap: 10px; }
.bottom .caret { width: 8px; }
.second { margin-left: 5px; }
.spin { display: flex; align-items: center; width: 26px; height: 13px; margin: 0 2px; padding-left: 2px; background: #fafafa; border: 1px solid #ddd; color: #777; }
.spin input { width: 14px; flex: 1; min-width: 0; }
.spin svg { width: 6px; height: 11px; }
```
